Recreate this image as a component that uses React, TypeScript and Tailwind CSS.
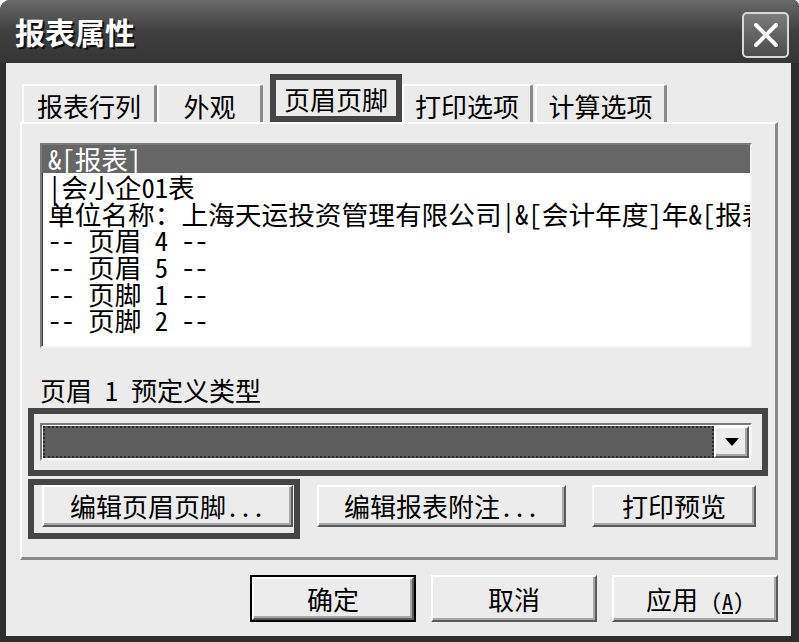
import React from "react";

const FONT = "font-['Noto_Sans_Mono_CJK_SC','Noto_Sans_CJK_SC',monospace]";

const raised =
  "border-2 border-t-white border-l-white border-r-[#5a5a5a] border-b-[#5a5a5a] shadow-[inset_-2px_-2px_0_#a8a8a8] bg-[#ececec]";

function Tab({ label, w, ml = "" }: { label: string; w: string; ml?: string }) {
  return (
    <div
      className={`${w} ${ml} h-[38px] flex items-center justify-center pt-[2px] border-t-2 border-l-2 border-t-white border-l-white border-r-[3px] border-r-[#8a8a8a] rounded-tr-[3px] text-[26px] text-black`}
    >
      {label}
    </div>
  );
}

function Btn({ label, className = "" }: { label: React.ReactNode; className?: string }) {
  return (
    <div
      className={`${raised} ${className} flex items-center justify-center text-[26px] text-black leading-none`}
    >
      {label}
    </div>
  );
}

const lines = [
  "|会小企01表",
  "单位名称：上海天运投资管理有限公司|&[会计年度]年&[报表]",
  "-- 页眉 4 --",
  "-- 页眉 5 --",
  "-- 页脚 1 --",
  "-- 页脚 2 --",
];

export default function App() {
  return (
    <div
      className={`${FONT} w-[799px] h-[642px] bg-[#2e2e2e] flex flex-col overflow-hidden rounded-tl-[10px] rounded-tr-[6px]`}
    >
      {/* title bar */}
      <div className="h-[63px] flex items-center justify-between pl-[15px] pr-[10px] bg-gradient-to-b from-[#6a6a6a] via-[#3f3f3f] to-[#353535]">
        <span className="text-white font-bold text-[30px] [text-shadow:2px_2px_0_#111]">
          报表属性
        </span>
        <div className="w-[47px] h-[46px] mt-[6px] rounded-[5px] border-2 border-[#d8d8d8] bg-gradient-to-b from-[#7c7c7c] to-[#4c4c4c] flex items-center justify-center">
          <svg width="30" height="30" viewBox="0 0 30 30">
            <path d="M5 5 L25 25 M25 5 L5 25" stroke="white" strokeWidth="4" strokeLinecap="round" />
          </svg>
        </div>
      </div>

      {/* client area */}
      <div className="flex-1 ml-[6px] mr-[8px] mb-[6px] bg-[#ebebeb] pl-[14px] pr-[13px] pt-[11px] flex flex-col">
        {/* tabs */}
        <div className="h-[48px] flex items-end">
          <Tab label="报表行列" w="w-[135px]" ml="ml-[2px]" />
          <Tab label="外观" w="w-[106px]" />
          <div className="ml-[7px] w-[132px] h-[48px] border-[6px] border-[#454545] bg-[#ebebeb] flex items-center justify-center text-[26px] text-black">
            页眉页脚
          </div>
          <Tab label="打印选项" w="w-[131px]" />
          <Tab label="计算选项" w="w-[132px]" ml="ml-[2px]" />
        </div>

        {/* tab panel */}
        <div className="h-[438px] border-t-2 border-l-2 border-t-white border-l-white border-r-[3px] border-b-[3px] border-r-[#8a8a8a] border-b-[#8a8a8a] pl-[6px] pt-[19px] flex flex-col">
          {/* listbox */}
          <div className="ml-[12px] w-[712px] h-[205px] bg-white border-2 border-t-[#7a7a7a] border-l-[#7a7a7a] border-r-[#f4f4f4] border-b-[#f4f4f4] shadow-[inset_1px_1px_0_#404040] overflow-hidden text-[26.7px] text-black">
            <div className="h-[28px] bg-[#666666] text-white leading-[28px] px-[6px] whitespace-nowrap">
              &amp;[报表]
            </div>
            {lines.map((l, i) => (
              <div key={i} className="h-[26.7px] leading-[27px] px-[6px] whitespace-nowrap">
                {l}
              </div>
            ))}
          </div>

          <div className="ml-[12px] mt-[28px] h-[27px] leading-[27px] text-[26px] text-black">
            页眉 1 预定义类型
          </div>

          {/* combo with focus outline */}
          <div className="mt-[5px] w-[740px] h-[68px] border-[6px] border-[#454545] pl-[6px] flex items-center">
            <div className="w-[712px] h-[38px] border-2 border-t-[#7a7a7a] border-l-[#7a7a7a] border-r-[#f4f4f4] border-b-[#f4f4f4] bg-white flex items-stretch p-[1px]">
              <div className="flex-1 bg-[#5e5e5e] border-2 border-dotted border-[#2a2a2a]" />
              <div className={`${raised} w-[35px] flex items-center justify-center`}>
                <svg width="14" height="8" viewBox="0 0 14 8">
                  <path d="M0 0 H14 L7 8 Z" fill="black" />
                </svg>
              </div>
            </div>
          </div>

          {/* buttons */}
          <div className="mt-[3px] flex items-start">
            <div className="w-[272px] h-[60px] border-[6px] border-[#454545] pl-[8px]">
              <Btn label="编辑页眉页脚..." className="w-[251px] h-[42px]" />
            </div>
            <Btn label="编辑报表附注..." className="ml-[17px] mt-[6px] w-[249px] h-[42px]" />
            <Btn label="打印预览" className="ml-[26px] mt-[6px] w-[164px] h-[42px]" />
          </div>
        </div>

        {/* bottom buttons */}
        <div className="mt-[15px] flex justify-end gap-[15px]">
          <div className="w-[166px] h-[47px] border-2 border-black">
            <Btn label="确定" className="w-full h-full" />
          </div>
          <Btn label="取消" className="w-[166px] h-[47px]" />
          <Btn
            label={
              <span>
                应用 <span className="text-[22px]">(<span className="underline">A</span>)</span>
              </span>
            }
            className="w-[166px] h-[47px]"
          />
        </div>
      </div>
    </div>
  );
}
